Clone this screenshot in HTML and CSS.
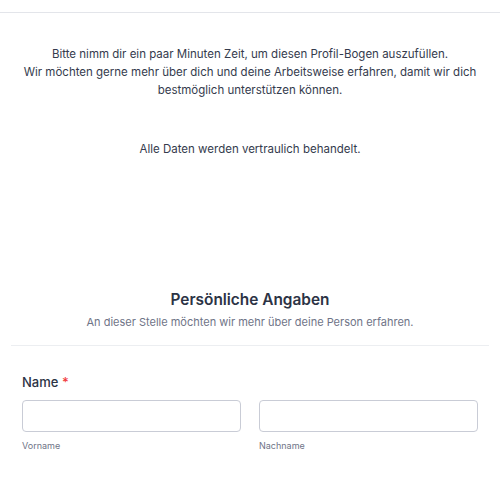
FILE: index.html
```html
<!DOCTYPE html>
<html lang="de">
<head>
<meta charset="utf-8">
<link rel="stylesheet" href="styles.css">
</head>
<body>
<div class="page">
  <div class="intro">
    <p class="lead">Bitte nimm dir ein paar Minuten Zeit, um diesen Profil-Bogen auszufüllen.<br>Wir möchten gerne mehr über dich und deine Arbeitsweise erfahren, damit wir dich bestmöglich unterstützen können.</p>
    <p class="note">Alle Daten werden vertraulich behandelt.</p>
  </div>
  <div class="section-head">
    <h2 class="title">Persönliche Angaben</h2>
    <p class="subtitle">An dieser Stelle möchten wir mehr über deine Person erfahren.</p>
  </div>
  <div class="field">
    <label class="field-label">Name <span class="req">*</span></label>
    <div class="name-row">
      <div class="name-col">
        <input class="text-input" type="text">
        <span class="sublabel">Vorname</span>
      </div>
      <div class="name-col">
        <input class="text-input" type="text">
        <span class="sublabel">Nachname</span>
      </div>
    </div>
  </div>
</div>
</body>
</html>
```
FILE: styles.css
```css
* { box-sizing: border-box; }
html, body { margin: 0; padding: 0; background: #fff; }
body {
  font-family: Inter, "Noto Sans", sans-serif;
  color: #2c3345;
  width: 500px;
  overflow: hidden;
}
.page {
  padding-top: 12px;
}
.intro {
  border-top: 1px solid #e3e5ea;
  padding: 32px 20px 0;
  text-align: center;
  height: 276px;
}
.lead {
  margin: 0;
  font-size: 11.5px;
  line-height: 18.2px;
  color: #353b4d;
}
.note {
  margin: 40px 0 0;
  font-size: 11.5px;
  line-height: 18.2px;
  color: #353b4d;
}
.section-head {
  margin: 0 11px;
  text-align: center;
  padding-bottom: 15px;
  border-bottom: 1px solid #eceef1;
}
.title {
  margin: 0;
  font-size: 15.4px;
  font-weight: 600;
  line-height: 24px;
}
.subtitle {
  margin: 2px 0 0;
  font-size: 11px;
  line-height: 16px;
  color: #6f7487;
}
.field {
  padding: 27px 22px 0;
}
.field-label {
  display: block;
  font-size: 13px;
  font-weight: 500;
  line-height: 18px;
}
.req { color: #f23a3c; }
.name-row {
  display: flex;
  gap: 18px;
  margin-top: 9px;
}
.name-col {
  flex: 1;
  display: flex;
  flex-direction: column;
}
.text-input {
  height: 32px;
  border: 1px solid #c9ccd6;
  border-radius: 4px;
  background: #fff;
  width: 100%;
  margin: 0;
}
.sublabel {
  margin-top: 7px;
  font-size: 9px;
  line-height: 14px;
  color: #6f7487;
}
```
